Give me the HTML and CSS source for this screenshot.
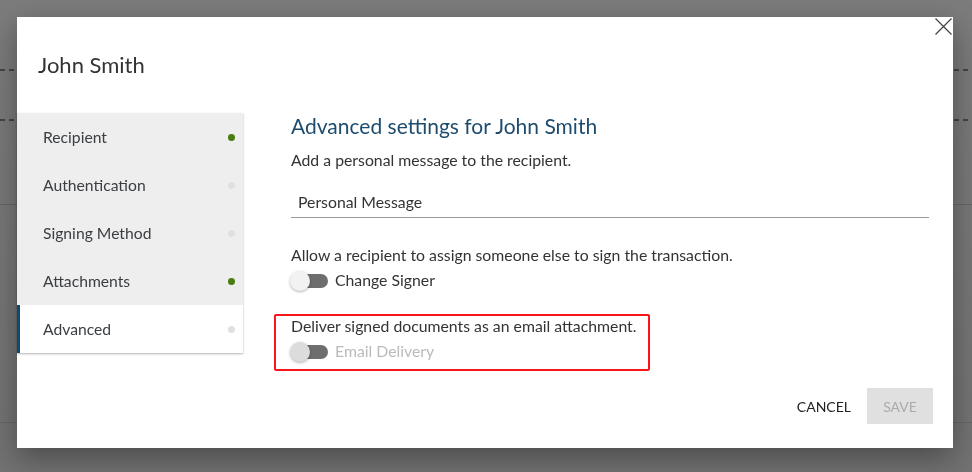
FILE: index.html
```html
<!DOCTYPE html>
<html>
<head>
    <title>Advanced settings</title>
    <link rel="stylesheet" href="styles.css">
</head>
<body>
<div class="page">
    <div class="rule dashed first"></div>
    <div class="rule dashed second"></div>
    <div class="rule solid third"></div>
    <div class="rule solid fourth"></div>
</div>

<div class="modal">
    <button type="button" class="close" aria-label="Close">
        <svg width="17" height="17" viewBox="0 0 17 17">
            <path d="M0.5 0.5 L16.5 16.5 M16.5 0.5 L0.5 16.5" stroke="#444" stroke-width="1.2" fill="none"/>
        </svg>
    </button>

    <div class="modal-header">John Smith</div>

    <div class="modal-body">
        <ul class="steps">
            <li class="step">Recipient <span class="dot done"></span></li>
            <li class="step">Authentication <span class="dot"></span></li>
            <li class="step">Signing Method <span class="dot"></span></li>
            <li class="step">Attachments <span class="dot done"></span></li>
            <li class="step active">Advanced <span class="dot"></span></li>
        </ul>

        <div class="settings">
            <h2>Advanced settings for John Smith</h2>
            <p class="hint">Add a personal message to the recipient.</p>
            <input class="message" type="text" placeholder="Personal Message">

            <div class="option">
                <p class="hint">Allow a recipient to assign someone else to sign the transaction.</p>
                <label class="switch-row">
                    <span class="switch"><span class="track"></span><span class="thumb"></span></span>
                    <span class="switch-label">Change Signer</span>
                </label>
            </div>

            <div class="option highlight">
                <p class="hint">Deliver signed documents as an email attachment.</p>
                <label class="switch-row disabled">
                    <span class="switch"><span class="track"></span><span class="thumb"></span></span>
                    <span class="switch-label">Email Delivery</span>
                </label>
            </div>
        </div>
    </div>

    <div class="modal-footer">
        <button type="button" class="btn-text">CANCEL</button>
        <button type="button" class="btn-save" disabled>SAVE</button>
    </div>
</div>
</body>
</html>
```

FILE: styles.css
```css
body {
    margin: 0;
    background-color: #767676;
    font-family: Lato, "Open Sans", Arial, sans-serif;
    color: #333;
}

.page {
    height: 472px;
    overflow: hidden;
    background: linear-gradient(#7c7c7c, #727272);
}

.rule {
    height: 2px;
}

.rule.dashed {
    background: repeating-linear-gradient(90deg, #444 0, #444 5px, transparent 5px, transparent 9px);
}

.rule.solid {
    height: 1px;
    background-color: #666;
}

.first { margin-top: 69px; }
.second { margin-top: 48px; }
.third { margin-top: 83px; }
.fourth { margin-top: 217px; }

.modal {
    position: fixed;
    left: 17px;
    top: 17px;
    width: 936px;
    background: #fff;
    box-shadow: 0 10px 28px rgba(0, 0, 0, 0.35);
}

.close {
    position: absolute;
    top: 1px;
    right: 1px;
    padding: 0;
    border: none;
    background: none;
    line-height: 0;
    cursor: pointer;
}

.modal-header {
    padding: 35px 21px 36px;
    font-size: 22px;
    line-height: 25px;
    color: #333;
}

.modal-body {
    display: flex;
}

.steps {
    list-style: none;
    margin: 0;
    padding: 0;
    width: 226px;
    align-self: flex-start;
    background: #eee;
    box-shadow: 0 1px 2px rgba(0, 0, 0, 0.3);
}

.step {
    display: flex;
    justify-content: space-between;
    align-items: center;
    height: 48px;
    padding: 0 8px 0 26px;
    font-size: 15.7px;
    color: #3a3d42;
}

.step.active {
    background: #fff;
    border-left: 3px solid #0c4a6e;
    padding-left: 23px;
}

.dot {
    width: 7px;
    height: 7px;
    border-radius: 50%;
    background: #e0e0e0;
}

.dot.done {
    background: #4a7c0f;
}

.settings {
    flex: 1;
    padding: 0 24px 0 48px;
}

h2 {
    margin: 0;
    font-size: 21px;
    line-height: 25px;
    font-weight: normal;
    color: #1d4c6e;
}

.hint {
    margin: 0;
    font-size: 15.8px;
    line-height: 18px;
    white-space: nowrap;
}

h2 + .hint {
    margin-top: 13px;
}

.message {
    display: block;
    width: 100%;
    box-sizing: border-box;
    margin-top: 14px;
    padding: 10px 7px 6px;
    border: none;
    border-bottom: 1px solid #999;
    font-family: inherit;
    font-size: 15.8px;
    line-height: 18px;
    outline: none;
}

.message::placeholder {
    color: #333;
}

.option {
    margin-top: 28px;
}

.highlight {
    margin: 21px 0 0 -17px;
    width: 344px;
    padding: 1px 13px 5px 15px;
    border: 2px solid #fb1418;
    border-radius: 2px;
}

.switch-row {
    display: flex;
    align-items: center;
    height: 24px;
    margin-top: 5px;
    font-size: 15.8px;
}

.switch-label {
    margin-top: -3px;
}

.switch {
    position: relative;
    width: 38px;
    height: 24px;
    margin: 0 7px 0 -1px;
}

.track {
    position: absolute;
    left: 9px;
    right: 0;
    top: 5px;
    height: 14px;
    border-radius: 7px;
    background: #6e6e6e;
}

.thumb {
    position: absolute;
    left: 0;
    top: 2px;
    width: 20px;
    height: 20px;
    border-radius: 50%;
    background: #f2f2f2;
    box-shadow: 0 1px 3px rgba(0, 0, 0, 0.3);
}

.switch-row.disabled {
    color: #bbb;
}

.disabled .thumb {
    background: #dcdcdc;
}

.modal-footer {
    display: flex;
    justify-content: flex-end;
    align-items: center;
    margin-top: 17px;
    padding: 0 20px 24px;
}

.btn-text {
    padding: 0 16px;
    border: none;
    background: none;
    font-family: inherit;
    font-size: 14px;
    color: #222;
    cursor: pointer;
}

.btn-save {
    width: 66px;
    height: 36px;
    border: none;
    background: #e0e0e0;
    font-family: inherit;
    font-size: 14px;
    color: #aaa;
}
```
